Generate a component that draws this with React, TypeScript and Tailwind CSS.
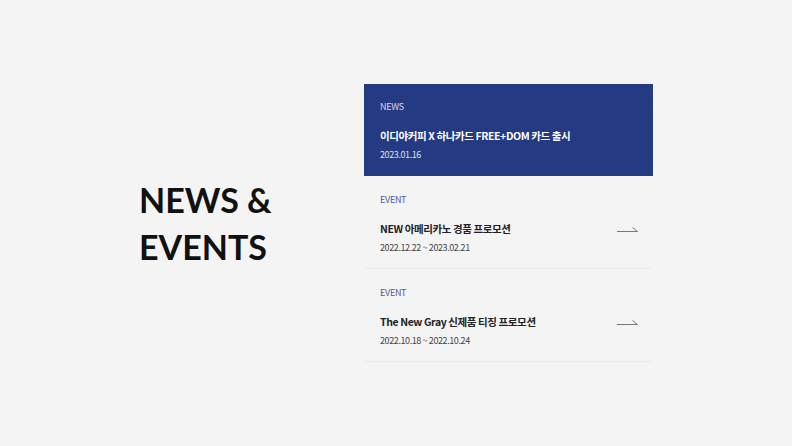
import React from "react";

const Arrow = () => (
  <svg width="21" height="6" viewBox="0 0 21 6" fill="none">
    <path d="M0 5.5H20.5L15.5 1.5" stroke="#777" strokeWidth="1" />
  </svg>
);

type Item = { label: string; title: string; date: string; active?: boolean };

const items: Item[] = [
  { label: "NEWS", title: "이디야커피 X 하나카드 FREE+DOM 카드 출시", date: "2023.01.16", active: true },
  { label: "EVENT", title: "NEW 아메리카노 경품 프로모션", date: "2022.12.22 ~ 2023.02.21" },
  { label: "EVENT", title: "The New Gray 신제품 티징 프로모션", date: "2022.10.18 ~ 2022.10.24" },
];

export default function App() {
  return (
    <div
      className="w-[792px] h-[446px] bg-[#f4f4f4] flex items-center justify-center"
      style={{ fontFamily: '"Noto Sans CJK KR", "Noto Sans", sans-serif' }}
    >
      <div className="flex">
        <div className="w-[225px] flex items-center">
          <h1
            className="text-[34px] leading-[47px] font-bold text-[#111] tracking-[0px]"
            style={{ fontFamily: '"Lato", "Liberation Sans", sans-serif' }}
          >
            NEWS &amp;
            <br />
            EVENTS
          </h1>
        </div>
        <div className="w-[289px] flex flex-col">
          {items.map((it, i) => (
            <div
              key={i}
              className={
                it.active
                  ? "h-[92px] bg-[#243a82] pl-4 pr-[15px] pt-[18px]"
                  : "h-[93px] border-b border-[#ebebeb] pl-4 pr-[15px] pt-[19px]"
              }
            >
              <div
                className={
                  "text-[9px] leading-[10px] tracking-[-0.3px] " +
                  (it.active ? "text-[#d5d9e8]" : "text-[#4d5b9e]")
                }
              >
                {it.label}
              </div>
              <div className="mt-[17px] flex items-center justify-between">
                <div
                  className={
                    "text-[10.5px] leading-[14px] font-bold tracking-[-0.4px] " +
                    (it.active ? "text-white" : "text-[#222]")
                  }
                >
                  {it.title}
                </div>
                {!it.active && <Arrow />}
              </div>
              <div
                className={
                  "mt-[6px] text-[9px] leading-[12px] tracking-[-0.4px] " +
                  (it.active ? "text-[#dfe2ee]" : "text-[#444]")
                }
              >
                {it.date}
              </div>
            </div>
          ))}
        </div>
      </div>
    </div>
  );
}
